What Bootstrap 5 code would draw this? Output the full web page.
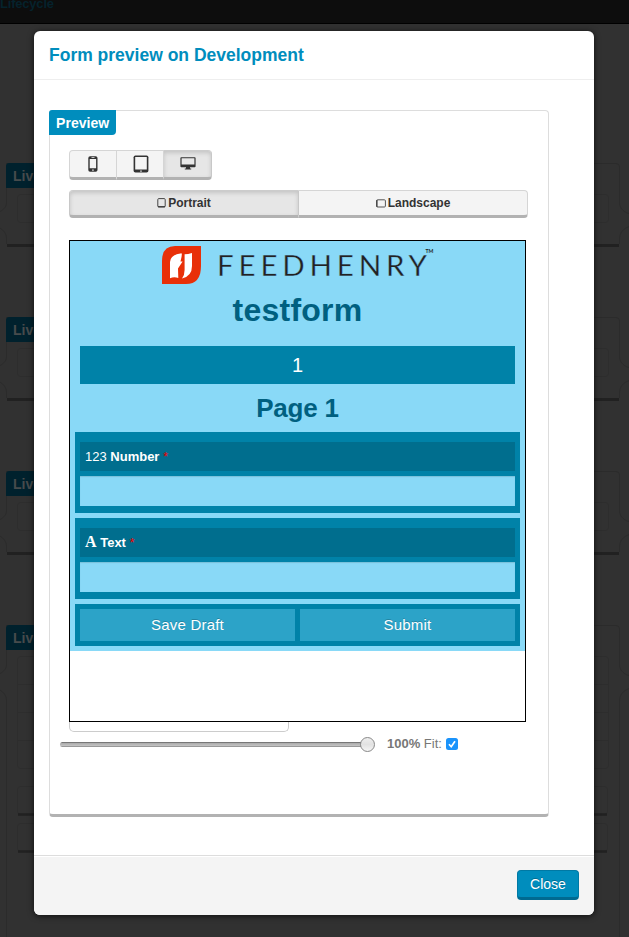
<!DOCTYPE html>
<html lang="en">
<head>
<meta charset="utf-8">
<meta name="viewport" content="width=device-width, initial-scale=1">
<title>Form preview on Development</title>
<link href="https://cdn.jsdelivr.net/npm/bootstrap@5.3.0/dist/css/bootstrap.min.css" rel="stylesheet">
<style>
body{font-family:"Liberation Sans",Arial,sans-serif;font-size:13px;line-height:20px;background:#313131;height:937px;overflow:hidden;color:#666}
.page-behind{inset:0;overflow:hidden}
.topbar{height:24px;background:#0d0d0d;border-bottom:1px solid #000;color:#05222c;font-size:13px;font-weight:bold;line-height:8px;margin-bottom:139px;letter-spacing:-.2px}
.stage{height:154px}
.stage.last{height:330px}
.stage svg{display:block;position:absolute;left:0;top:0;fill:none;stroke:#2b2b2b}
.tag{display:inline-block;background:#008dbd;color:#fff;font-size:14px;font-weight:bold;line-height:26px;height:25px;padding:0 7px;border-radius:3px 0 4px 0}
.stage .tag{background:#00212d;color:#474b4c;margin-left:6px;position:relative}
.dialog{width:560px;height:884px;margin:31px 0 0 34px;background:#fff;border-radius:6px;box-shadow:0 1px 6px rgba(0,0,0,.7);overflow:hidden}
.dialog-head{height:49px;border-bottom:1px solid #eee;padding:0 15px;flex:none}
.dialog-head h1{font-size:17.5px;font-weight:bold;color:#008dbd;line-height:48px;margin:0}
.dialog-main{padding:30px 45px 0 15px}
.panel-box{height:707px;border:1px solid #ddd;border-bottom:3px solid #b2b2b2;border-radius:4px}
.panel-box .tag{margin:-1px 0 0 -1px;letter-spacing:.05px}
.inner{padding:15px 20px 0 19px}
.tool{background:#f4f4f4;border:1px solid #d5d5d5;border-bottom:3px solid #b2b2b2;color:#333;font-size:12px;font-weight:bold}
.tool+.tool{border-left-width:0}
.tool:first-child{border-radius:4px 0 0 4px}
.tool:last-child{border-radius:0 4px 4px 0}
.tool.on{background:#e6e6e6;border-color:#ccc #c8c8c8 #b2b2b2;box-shadow:inset 0 2px 4px rgba(0,0,0,.15)}
.devices{width:143px;height:30px}
.devices .tool{width:48px;padding-bottom:1px;padding-left:1px}
.turn{width:459px;height:28px;margin-top:10px}
.turn .tool:first-child{width:230px}.turn .tool:last-child{width:229px}
.turn .tool{line-height:24px}
.turn svg{margin-right:2px}
.screen{width:457px;height:482px;border:1px solid #000;margin-top:22px;background:#fff;position:relative;z-index:1}
.sheet{background:#89d9f7;height:410px;padding:0 5px 5px;color:#fff}
.brand{height:49px;padding-left:86px}
.brand svg{display:block}
.sheet h2{font-size:32px;line-height:40px;font-weight:bold;color:#006080;margin:0;letter-spacing:.25px}
.sheet h3{font-size:26px;line-height:48px;font-weight:bold;color:#006080;margin:0;letter-spacing:-.2px}
.pager{height:38px;line-height:39px;background:#0082a8;font-size:20px;margin:16px 5px 0}
.field{background:#0082a8;padding:10px 5px 0;height:81px;margin-bottom:5px}
.field-label{background:#006e8e;height:29px;line-height:29px;padding-left:5px;font-weight:bold;font-size:13px;margin-bottom:5px}
.field-label i{font-style:normal;font-weight:normal}
.field-label .serif{font:bold 16px/28px "Liberation Serif",serif}
.req{color:#e00;font-weight:normal}
.field-input{height:30px;background:#89d9f7;box-shadow:inset 0 1px 1px rgba(0,0,0,.12)}
.actions{background:#0082a8;padding:5px;height:42px;gap:5px}
.act{background:#2ca3c8;font-size:15px;letter-spacing:.2px;line-height:31px;text-shadow:0 -1px 0 rgba(0,0,0,.2)}
.picker{width:220px;height:11px;border:1px solid #ccc;border-top:0;border-radius:0 0 5px 5px;margin-top:-1px}
.zoomer{margin:2px 0 0 -9px;height:20px}
.track{width:307px;height:5px;border-radius:3px;background:linear-gradient(#777 0 1px,#aaa 1px,#c4c4c4 4px,#999 4px)}
.knob{width:15px;height:15px;border-radius:50%;border:1px solid #888;background:linear-gradient(#eee,#e2e2e2 50%,#f5f5f5);margin-left:-7px}
.fit-option{margin-left:12px;color:#777}
.dialog-foot{height:60px;background:#f4f4f4;border-top:1px solid #ddd;box-shadow:inset 0 1px 0 #fff;padding:14px 15px;flex:none}
.close-btn{width:62px;height:30px;background:#008dbd;border:1px solid #0079a4;border-bottom:3px solid #006a91;border-radius:4px;color:#fff;font-size:14px;line-height:26px;padding:0;text-shadow:0 -1px 0 rgba(0,0,0,.25)}
</style>
<script src="https://cdn.jsdelivr.net/npm/bootstrap@5.3.0/dist/js/bootstrap.bundle.min.js"></script>
</head>
<body>
<svg width="0" height="0" class="position-absolute">
  <defs>
    <g id="piece">
      <path d="M6.500 25V40C6.500 46-1 50-7 51M-7 63C1 64 6.500 69 6.500 75V81M6 .5H616Q619.500.5 619.500 4V40C619.500 46 625 50 631 51M631 63C623 65 619.500 70 619.500 76V81"/>
      <path d="M7 82.500H619" stroke="#212121" stroke-width="3"/>
      <rect x="17.500" y="31.500" width="591" height="28" rx="3" stroke="#2d2d2d"/>
    </g>
  </defs>
</svg>
<div class="page-behind position-absolute" aria-hidden="true">
  <div class="topbar">Lifecycle</div>
  <div class="stage position-relative"><svg width="629" height="90"><use href="#piece"/></svg><span class="tag">Live</span></div>
  <div class="stage position-relative"><svg width="629" height="90"><use href="#piece"/></svg><span class="tag">Live</span></div>
  <div class="stage position-relative"><svg width="629" height="90"><use href="#piece"/></svg><span class="tag">Live</span></div>
  <div class="stage last position-relative">
    <svg width="629" height="330">
      <path d="M6.500 25V40C6.500 46-1 50-7 51M-7 63C1 64 6.500 69 6.500 75V330M6 .5H616Q619.500.5 619.500 4V40C619.500 46 625 50 631 51M631 63C623 65 619.500 70 619.500 76V330"/>
      <g stroke="#2d2d2d"><rect x="17.500" y="31.500" width="591" height="112" rx="3"/>
      <path d="M17 59.500H608M17 87.500H608M17 115.500H608"/>
      <rect x="17.500" y="161.500" width="590" height="28" rx="3"/><rect x="17.500" y="198.500" width="590" height="28" rx="3"/></g>
      <path d="M18 189.500H607M18 226.500H607" stroke="#212121" stroke-width="2.500"/>
    </svg><span class="tag">Live</span>
  </div>
</div>

<main class="dialog d-flex flex-column position-relative">
  <header class="dialog-head"><h1>Form preview on Development</h1></header>
  <section class="dialog-main flex-grow-1">
    <div class="panel-box">
      <div class="d-flex"><span class="tag">Preview</span></div>
      <div class="inner">
        <div class="devices d-flex">
          <div class="tool d-flex justify-content-center align-items-center"><svg width="10" height="16" viewBox="0 0 10 16"><rect x=".3" y=".3" width="9.200" height="15.400" rx="1.800" fill="#333"/><path fill="#f4f4f4" d="M1.700 3h6.400v9.300H1.700zM3.500 1.300h3v.6h-3zM4.200 13.400h1.500v1.300H4.200z"/></svg></div>
          <div class="tool d-flex justify-content-center align-items-center"><svg width="16" height="18" viewBox="0 0 16 18"><rect x=".6" y=".4" width="14.800" height="17.200" rx="1.800" fill="#333"/><path fill="#f4f4f4" d="M2.200 2h11.600v12.500H2.200zM7.300 15.400h1.400v1.300H7.300z"/></svg></div>
          <div class="tool on d-flex justify-content-center align-items-center"><svg width="16" height="16" viewBox="0 0 16 16"><path fill="#333" d="M1.300 1.200h13.400q.9 0 .9.900v8.200q0 .9-.9.900H10v1.200h1.200v1.200H4.800v-1.200H6v-1.200H1.300q-.9 0-.9-.9V2.100q0-.9.900-.9z"/><path fill="#e8e8e8" d="M1.600 2.300h12.800v6.300H1.600z"/></svg></div>
        </div>
        <div class="turn d-flex">
          <div class="tool on d-flex justify-content-center align-items-center"><svg width="9" height="10"><rect x=".8" y=".6" width="7.400" height="8.400" rx="1" fill="none" stroke="#444"/><path d="M1 8.700h7" stroke="#333"/></svg>Portrait</div>
          <div class="tool d-flex justify-content-center align-items-center"><svg width="10" height="9"><rect x=".6" y=".8" width="8.800" height="7.200" rx="1" fill="none" stroke="#555"/><path d="M1 1v7" stroke="#333"/></svg>Landscape</div>
        </div>

        <div class="screen">
          <div class="sheet">
            <div class="brand">
              <svg width="290" height="49" viewBox="0 0 290 49">
                <path d="M14 5H40V25Q40 43 25 43H1V20Q1 5 14 5Z" fill="#e83008"/>
                <path d="M9 37.300V21Q9.500 13.500 20.500 12.300 21.500 13 19.500 20.500H21.600L17 27.500 17.300 37Q13 35.500 9 37.300ZM23.600 13.300Q27 13.300 31 12V25Q31 35 21 37.600 23.600 34 23.600 29Z" fill="#fff"/>
                <text x="56" y="35.300" font-family="Lato,sans-serif" font-weight="400" font-size="29.500" fill="#222" stroke="#89d9f7" stroke-width=".35" textLength="210" lengthAdjust="spacing">FEEDHENRY</text>
                <text x="264.500" y="12" font-family="Lato,sans-serif" font-weight="bold" font-size="5.500" fill="#222" textLength="8" lengthAdjust="spacingAndGlyphs">TM</text>
              </svg>
            </div>
            <h2 class="text-center">testform</h2>
            <div class="pager text-center">1</div>
            <h3 class="text-center">Page 1</h3>
            <div class="field">
              <div class="field-label"><i>123</i> Number <span class="req">*</span></div>
              <div class="field-input"></div>
            </div>
            <div class="field">
              <div class="field-label"><span class="serif">A</span> Text <span class="req">*</span></div>
              <div class="field-input"></div>
            </div>
            <div class="actions d-flex">
              <div class="act flex-fill w-50 text-center">Save Draft</div>
              <div class="act flex-fill w-50 text-center">Submit</div>
            </div>
          </div>
        </div>
        <div class="picker"></div>
        <div class="zoomer d-flex align-items-center">
          <div class="track"></div><div class="knob"></div>
          <div class="fit-option d-flex align-items-center"><b>100%</b>&nbsp;Fit:
            <svg class="ms-1" width="12" height="12"><rect width="12" height="12" rx="2.500" fill="#1a93fb"/><path d="M3 6.300 5.200 8.700 9 3.200" fill="none" stroke="#fff" stroke-width="1.700"/></svg>
          </div>
        </div>
      </div>
    </div>
  </section>
  <footer class="dialog-foot d-flex justify-content-end"><button class="btn close-btn" type="button">Close</button></footer>
</main>
</body>
</html>
